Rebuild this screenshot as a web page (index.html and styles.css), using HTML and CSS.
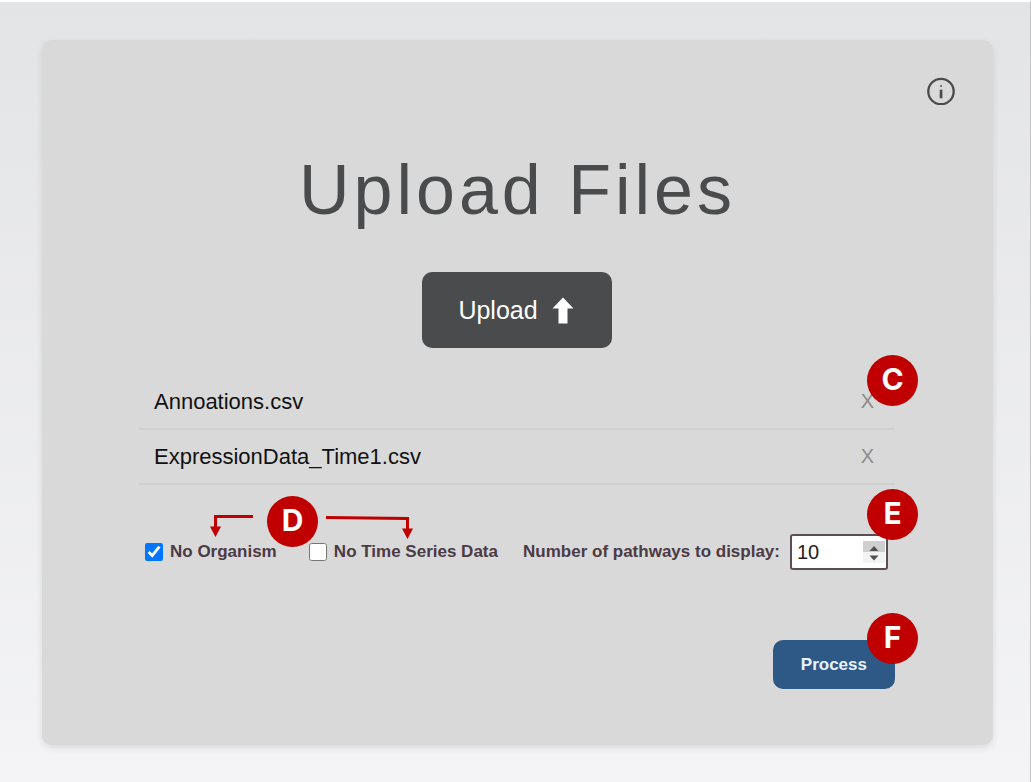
FILE: index.html
```
<!DOCTYPE html>
<html lang="en">
<head>
<meta charset="utf-8">
<meta name="viewport" content="width=device-width, initial-scale=1">
<title>Upload Files</title>
<link rel="stylesheet" href="styles.css">
</head>
<body>
<main class="card">
  <div class="card-top">
    <button class="info-button" type="button" aria-label="Information">
      <svg viewBox="0 0 28 28" width="28" height="28" aria-hidden="true">
        <circle cx="14" cy="14.500" r="12.700" fill="none" stroke="currentColor" stroke-width="2.3"/>
        <rect x="13" y="8" width="2" height="2" fill="currentColor" opacity="0.7"/>
        <rect x="12.700" y="12.700" width="2.700" height="8.600" fill="currentColor"/>
      </svg>
    </button>
  </div>
  <h1 class="title">Upload Files</h1>
  <form class="form">
    <button class="upload-button" type="button">
      Upload
      <svg viewBox="0 0 22 27" width="22" height="27" aria-hidden="true">
        <path d="M11 0.5 L21.5 11.5 H15.5 V26.5 H6.5 V11.5 H0.5 Z" fill="currentColor"/>
      </svg>
    </button>
    <ul class="files">
      <li class="file">
        <span>Annoations.csv</span>
        <button class="remove" type="button" aria-label="Remove Annoations.csv">X</button>
        <span class="badge badge-c">C</span>
      </li>
      <li class="file">
        <span>ExpressionData_Time1.csv</span>
        <button class="remove" type="button" aria-label="Remove ExpressionData_Time1.csv">X</button>
      </li>
    </ul>
    <div class="options">
      <label class="check check-organism"><input type="checkbox" checked>No Organism</label>
      <label class="check"><input type="checkbox">No Time Series Data</label>
      <div class="field">
        <label for="pathways">Number of pathways to display:</label>
        <span class="number">
          <input id="pathways" type="number" value="10" min="1">
          <svg class="spinner" viewBox="0 0 22 22" width="22" height="22" aria-hidden="true">
            <rect width="22" height="22" fill="#f3f3f3"/>
            <rect width="22" height="11" fill="#cfcfcf"/>
            <path d="M6.500 10 H15.500 L11 5 Z M6.500 14.500 H15.500 L11 19.500 Z" fill="#505050"/>
          </svg>
        </span>
        <span class="badge badge-e">E</span>
      </div>
      <svg class="callout" viewBox="0 0 204 26" width="204" height="26" aria-hidden="true">
        <path d="M44 2.5 H6.5 V14 M117 3.5 L198.5 4.5 V16" fill="none" stroke="#c00000" stroke-width="3"/>
        <path d="M1 12.500 H12 L6.500 23 Z M193 14.500 H204 L198.500 25 Z" fill="#c00000"/>
      </svg>
      <span class="badge badge-d">D</span>
    </div>
    <div class="actions">
      <button class="process-button" type="submit">Process</button>
      <span class="badge badge-f">F</span>
    </div>
  </form>
</main>
</body>
</html>
```
FILE: styles.css
```
* {
  box-sizing: border-box;
}

body {
  margin: 0;
  min-height: 100vh;
  border-top: 2px solid #fff;
  border-right: 1px solid #c4c4c4;
  padding: 38px 37px 37px 42px;
  background: linear-gradient(#e3e4e5, #f4f4f6);
  font-family: "Liberation Sans", Arial, sans-serif;
  color: #111;
}

button,
input {
  font: inherit;
}

button {
  border: 0;
  cursor: pointer;
}

.card {
  padding: 37px 38px 56px;
  border-radius: 10px;
  background: #d9d9d9;
  box-shadow: 0 3px 7px rgba(0, 0, 0, 0.1);
}

.card-top {
  display: flex;
  justify-content: flex-end;
}

.info-button {
  display: flex;
  padding: 0;
  background: none;
  color: #4a4b4c;
}

.title {
  margin: 45px 0 42px;
  font-size: 70px;
  font-weight: 400;
  line-height: 80px;
  letter-spacing: 4px;
  text-align: center;
  color: #4a4b4c;
}

.form {
  display: flex;
  flex-direction: column;
  margin: 0 60px 0 59px;
}

.upload-button {
  display: flex;
  align-items: center;
  align-self: center;
  gap: 14px;
  height: 76px;
  padding: 0 38px 0 36px;
  border-radius: 10px;
  background: #4a4b4c;
  color: #fff;
  font-size: 25px;
}

.files {
  margin: 27px 0 0;
  padding: 0;
  list-style: none;
}

.file {
  position: relative;
  display: flex;
  align-items: center;
  justify-content: space-between;
  height: 55px;
  padding: 0 21px 0 15px;
  border-bottom: 2px solid #d0d0d0;
  font-size: 22px;
}

.remove {
  padding: 0;
  background: none;
  color: #8c8c8c;
  font-size: 20px;
}

.options {
  position: relative;
  display: flex;
  align-items: center;
  justify-content: space-between;
  margin-top: 49px;
  padding: 0 7px 0 6px;
  font-size: 17px;
  font-weight: 700;
  color: #4c3a44;
}

.check {
  display: flex;
  align-items: center;
  gap: 7px;
}

.check-organism {
  margin-right: 7px;
}

.check input {
  width: 18px;
  height: 18px;
  margin: 0;
}

.field {
  position: relative;
  display: flex;
  align-items: center;
  gap: 10px;
}

.number {
  position: relative;
}

.number input {
  display: block;
  width: 98px;
  height: 36px;
  padding: 0 28px 0 5px;
  border: 2px solid #5c4c55;
  border-radius: 3px;
  background: #fff;
  color: #222;
  font-size: 20px;
  font-weight: 400;
  appearance: textfield;
}

.spinner {
  position: absolute;
  top: 7px;
  right: 3px;
  pointer-events: none;
}

.actions {
  position: relative;
  display: flex;
  justify-content: flex-end;
  margin-top: 70px;
}

.process-button {
  height: 49px;
  padding: 0 28px;
  border-radius: 10px;
  background: #2e5986;
  color: #e9f3ff;
  font-size: 17px;
  font-weight: 700;
}

.badge {
  position: absolute;
  display: grid;
  place-items: center;
  width: 51px;
  height: 51px;
  border-radius: 50%;
  background: #c00000;
  color: #fff;
  font-family: Inter, sans-serif;
  font-size: 30px;
  font-weight: 700;
  line-height: 48px;
  padding-bottom: 3px;
}

.badge-c {
  top: -20px;
  right: -23px;
}

.badge-d {
  top: -38px;
  left: 128px;
}

.badge-e {
  top: -45px;
  right: -30px;
}

.badge-f {
  top: -27px;
  right: -23px;
}

.callout {
  position: absolute;
  top: -20px;
  left: 70px;
}
```
